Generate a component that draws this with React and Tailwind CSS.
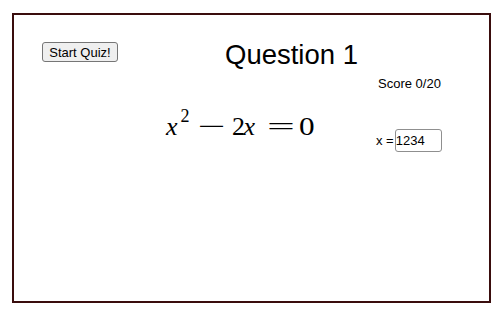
export default function App() {
  const math = { fontFamily: '"Liberation Serif", "Times New Roman", serif' };
  const sans = { fontFamily: '"Liberation Sans", Arial, sans-serif' };
  return (
    <div className="w-[497px] h-[309px] bg-white overflow-hidden pt-[13px] pl-[12px]" style={sans}>
      <div className="w-[479px] h-[290px] border-2 border-[#3a0d0d] bg-white text-black">
        {/* Row 1 */}
        <div className="flex items-start">
          <button className="ml-[28px] mt-[27px] w-[76px] h-[20px] border border-[#767676] rounded-[3px] bg-[#efefef] text-[13px] leading-none text-black flex items-center justify-center">
            Start Quiz!
          </button>
          <div className="ml-[107px] mt-[26px] text-[27.5px] leading-none">Question 1</div>
        </div>
        {/* Row 2 */}
        <div className="mt-[8px] ml-[364px] text-[13px] leading-none">Score 0/20</div>
        {/* Row 3 */}
        <div className="flex items-start mt-[17px]">
          <div className="ml-[152px] w-[150px] flex items-start text-[26px] leading-none" style={math}>
            <span className="mt-[7px] w-[14.5px] italic">x</span>
            <span className="w-[17px] text-[18px] leading-none">2</span>
            <span className="mt-[7px] w-[34.5px]">
              <span className="inline-block scale-x-[1.9] origin-left">−</span>
            </span>
            <span className="mt-[7px] w-[11.5px]">2</span>
            <span className="mt-[7px] w-[23px] italic">x</span>
            <span className="mt-[7px] w-[32.5px]">
              <span className="inline-block scale-x-[1.9] origin-left">=</span>
            </span>
            <span className="mt-[7px]">
              <span className="inline-block scale-x-[1.2] origin-left">0</span>
            </span>
          </div>
          <div className="ml-[60px] mt-[22px] flex items-center">
            <span className="text-[13px] leading-none">x =</span>
            <input
              defaultValue="1234"
              className="ml-[1px] w-[47px] h-[23px] border border-[#8f8f8f] rounded-[3px] px-0 text-[13px] text-black outline-none bg-white"
              style={sans}
            />
          </div>
        </div>
      </div>
    </div>
  );
}
